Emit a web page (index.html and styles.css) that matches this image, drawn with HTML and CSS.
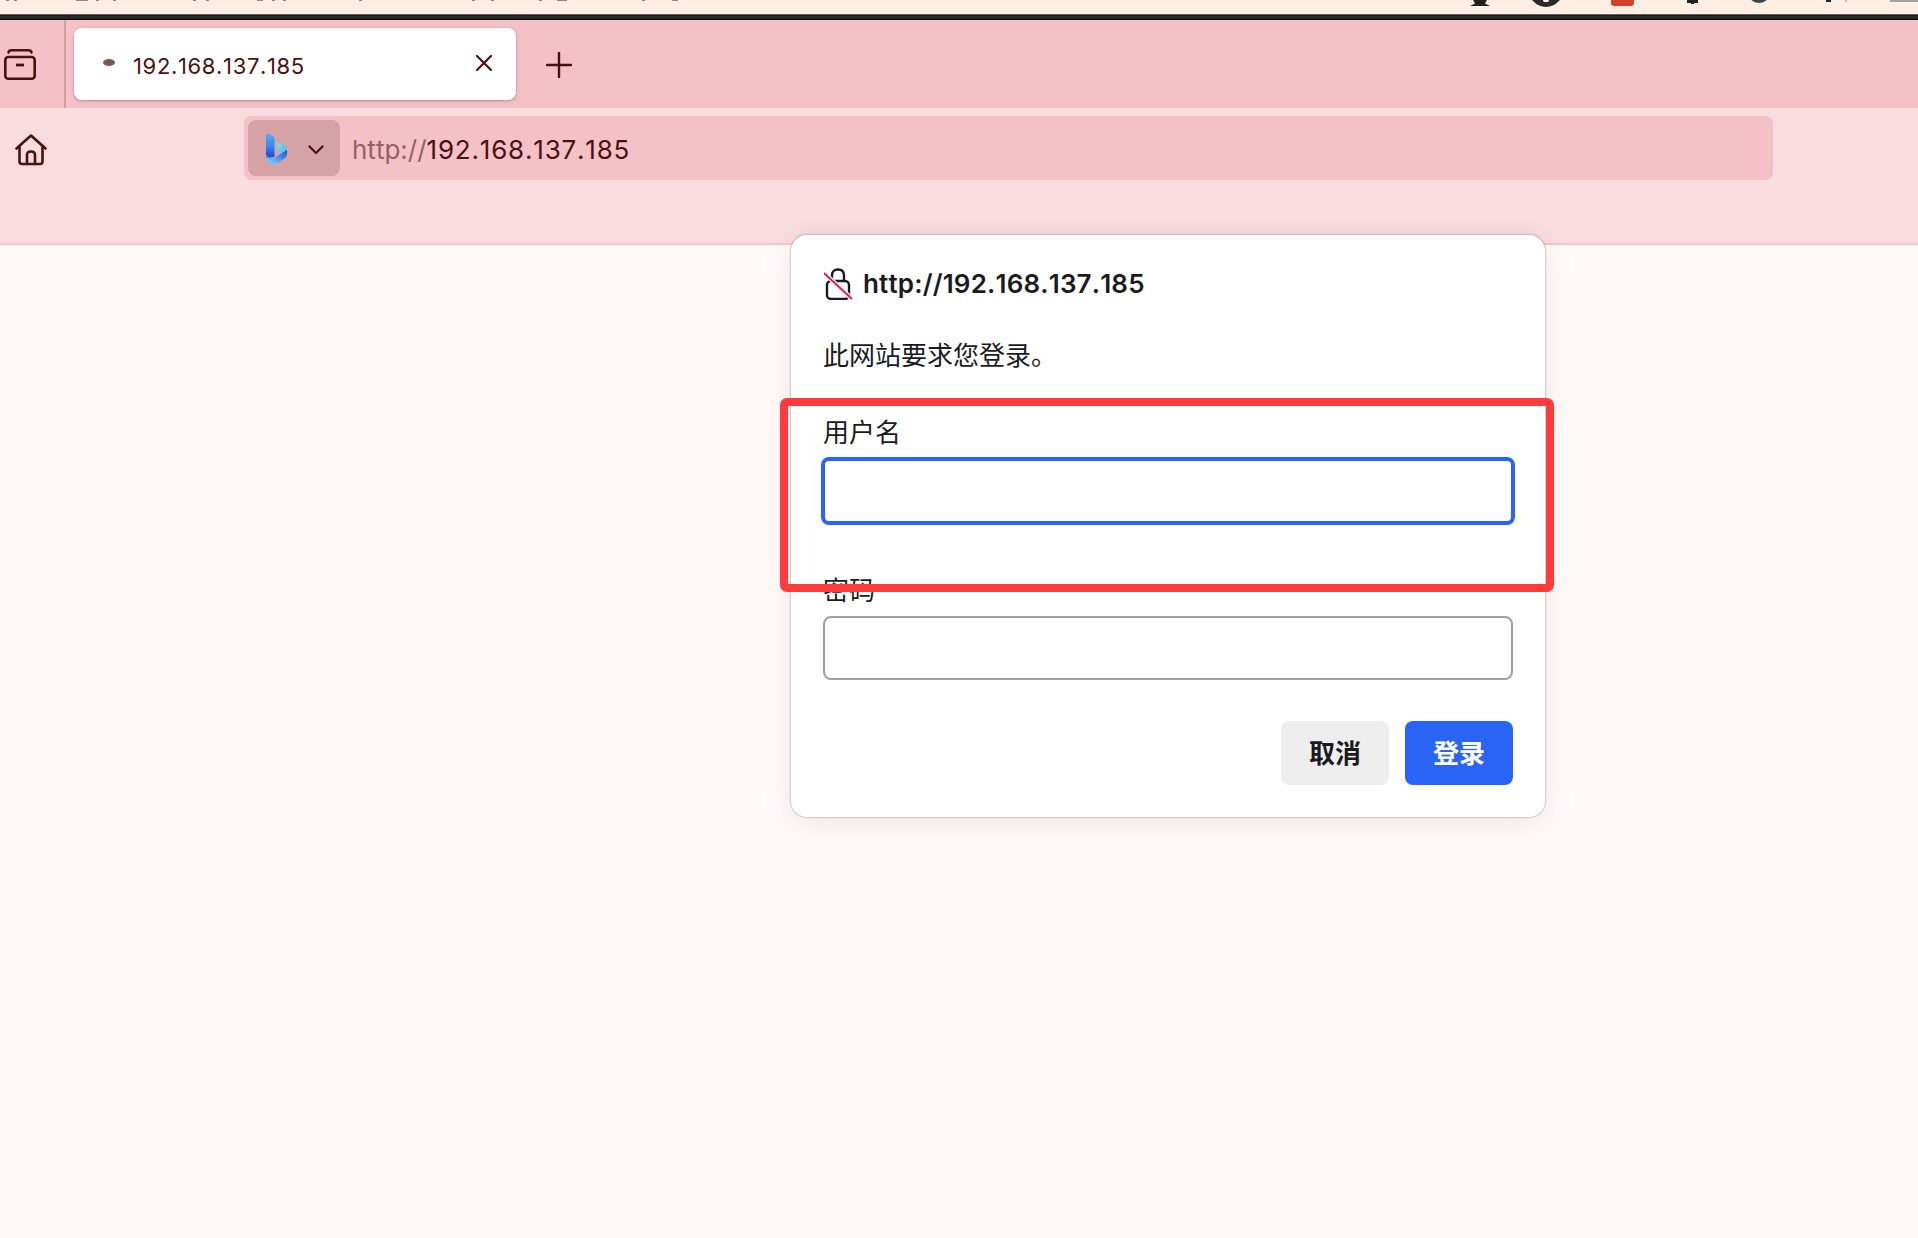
FILE: index.html
```html
<!DOCTYPE html>
<html lang="zh">
<head>
<meta charset="utf-8">
<title>192.168.137.185</title>
<link rel="stylesheet" href="styles.css">
</head>
<body>
<div class="menubar">
  <span class="blip b1"></span><span class="blip b2"></span><span class="blip b3"></span><span class="blip b4"></span>
  <span class="blip b5"></span><span class="blip b6"></span><span class="blip b7"></span><span class="blip b8"></span>
  <span class="blip b9"></span><span class="blip b10"></span><span class="blip b11"></span><span class="blip b12"></span>
  <span class="blip b13"></span><span class="blip b14"></span><span class="blip b15"></span><span class="blip b16"></span><span class="blip b17"></span>
  <span class="tray t1"></span><span class="tray t2"></span><span class="tray t3"></span><span class="tray t4"></span><span class="tray t5"></span><span class="tray t6"></span><span class="tray t7"></span><span class="tray t8"></span>
</div>
<div class="rule"></div>
<header class="tabbar">
  <div class="tabside">
    <svg class="ico-box" viewBox="0 0 32 31" fill="none" stroke="#4a1110" stroke-width="2.600" stroke-linecap="round" stroke-linejoin="round"><path d="M4.500 3.500Q5 1.300 7.500 1.300H24.500Q27 1.300 27.500 3.500"/><rect x="1.300" y="8" width="29.400" height="21.700" rx="3"/><path d="M12 16H20" stroke-width="2.800" stroke-linecap="butt"/></svg>
  </div>
  <div class="tab">
    <span class="favdot"></span>
    <span class="tabtitle">192.168.137.185</span>
    <svg class="ico-x" viewBox="0 0 18 18" fill="none" stroke="#4a1110" stroke-width="2.200" stroke-linecap="round"><path d="M2 2L16 16M16 2L2 16"/></svg>
  </div>
  <svg class="ico-plus" viewBox="0 0 26 26" fill="none" stroke="#4a1110" stroke-width="2.400" stroke-linecap="round"><path d="M13 1V25M1 13H25"/></svg>
</header>
<div class="toolbar">
  <svg class="ico-home" viewBox="0 0 32 32" fill="none" stroke="#4a1110" stroke-width="2.600" stroke-linecap="round" stroke-linejoin="round"><path d="M1.500 14.500L16 1.500L30.500 14.500"/><path d="M4.500 12V27.500Q4.500 30 7 30H25Q27.500 30 27.500 27.500V12"/><path d="M12 30V21Q12 17.500 16 17.500Q20 17.500 20 21V30"/></svg>
  <div class="omnibox">
    <div class="engine">
      <svg class="ico-bing" viewBox="0 0 21 31"><defs><linearGradient id="bg1" x1="0" y1="0" x2="0" y2="1"><stop offset="0" stop-color="#4fb0f7"/><stop offset=".55" stop-color="#3a82ee"/><stop offset="1" stop-color="#2340d6"/></linearGradient><linearGradient id="bg2" x1="0" y1="1" x2="1" y2="0"><stop offset="0" stop-color="#82def6"/><stop offset=".5" stop-color="#4a9af0"/><stop offset="1" stop-color="#2a45cc"/></linearGradient><linearGradient id="bg3" x1="0" y1="0" x2="1" y2="1"><stop offset="0" stop-color="#7be3f0"/><stop offset="1" stop-color="#4fb8ec"/></linearGradient></defs><path d="M10 9L19.500 13Q21 14 21 18L13 21Z" fill="url(#bg3)"/><path d="M0 1.500Q0 0 1.500 .6L6 2.500Q8.500 3.500 8.500 6V24L0 25Z" fill="url(#bg1)"/><path d="M8 25L21 17V21Q21 24 18 26L12 30Q10 31 8 31Q1 31 0 23V21Q1 26 8 25Z" fill="url(#bg2)"/></svg>
      <svg class="ico-chev" viewBox="0 0 16 10" fill="none" stroke="#4a1110" stroke-width="2.200" stroke-linecap="round" stroke-linejoin="round"><path d="M1.500 1.500L8 8L14.500 1.500"/></svg>
    </div>
    <span class="url"><span class="scheme">http://</span><span class="ip">192.168.137.185</span></span>
  </div>
</div>
<main class="page"></main>

<section class="dialog">
  <div class="dtitle">
    <svg class="ico-lock" viewBox="0 0 30 32" fill="none"><path d="M8 14V7.500Q8 1.500 14 1.500Q20 1.500 20 7.500V14" stroke="#1a1a1f" stroke-width="2.400"/><rect x="3" y="13" width="22" height="18" rx="4" stroke="#1a1a1f" stroke-width="2.400"/><path d="M0 5L28 31" stroke="#fff" stroke-width="4.500"/><path d="M0 5L28 31" stroke="#e0294f" stroke-width="2.200"/></svg>
    <span class="host">http://192.168.137.185</span>
  </div>
  <p class="prompt">此网站要求您登录。</p>
  <label class="flabel user" for="u">用户名</label>
  <input class="field focus" id="u" type="text">
  <label class="flabel pass" for="p">密码</label>
  <input class="field" id="p" type="password">
  <div class="actions">
    <button class="btn cancel" type="button">取消</button>
    <button class="btn ok" type="button">登录</button>
  </div>
</section>
<div class="annot"></div>
</body>
</html>
```
FILE: styles.css
```css
* { box-sizing: border-box; }
html, body { margin: 0; height: 100%; }
body {
  width: 1918px;
  height: 1238px;
  overflow: hidden;
  display: flex;
  flex-direction: column;
  background: #fffaf9;
  font-family: Inter, "Noto Sans CJK SC", sans-serif;
  font-kerning: none;
  position: relative;
}
.menubar { height: 14px; background: #ffeee4; position: relative; overflow: hidden; flex: none; }
.blip, .tray { position: absolute; background: #222; }
.blip { top: 0; height: 1px; width: 3px; opacity: .5; }
.b1 { left: 6px; }
.b2 { left: 14px; }
.b3 { left: 76px; width: 12px; }
.b4 { left: 96px; }
.b5 { left: 113px; }
.b6 { left: 193px; }
.b7 { left: 206px; }
.b8 { left: 257px; width: 6px; }
.b9 { left: 272px; }
.b10 { left: 283px; }
.b11 { left: 359px; }
.b12 { left: 472px; }
.b13 { left: 491px; }
.b14 { left: 539px; }
.b15 { left: 557px; width: 10px; }
.b16 { left: 642px; }
.b17 { left: 672px; width: 6px; }
.t1 { left: 1470px; top: 0; width: 20px; height: 6px; background: #222; clip-path: polygon(15% 0, 85% 0, 75% 60%, 100% 100%, 0 100%, 25% 60%); }
.t2 { left: 1528px; top: -32px; width: 36px; height: 39px; border-radius: 50%; background: #2a2a2a; }
.t2::after { content: ""; position: absolute; left: 15px; top: 31px; width: 6px; height: 3px; border-radius: 50%; background: #fff0e6; }
.t3 { left: 1611px; top: -6px; width: 23px; height: 12px; border-radius: 3px; background: #d8402c; }
.t4 { left: 1687px; top: 0; width: 11px; height: 3px; }
.t4::after { content: ""; position: absolute; left: 4px; top: 0; width: 3px; height: 4px; background: #222; }
.t5 { left: 1750px; top: -10px; width: 18px; height: 13px; border-radius: 50%; background: #fff0e6; border: 3px solid #444; }
.t6 { left: 1826px; top: 0; width: 5px; height: 2px; }
.t7 { left: 1845px; top: 0; width: 2px; height: 2px; background: #c8c0ba; }
.t8 { left: 1890px; top: 0; width: 28px; height: 2px; background: #a8a29d; }
.rule { height: 6px; flex: none; background: linear-gradient(#8a8580, #1a1a1a 25%, #333 55%, #000); }

.tabbar { height: 88px; background: #f3c1c6; display: flex; align-items: flex-start; flex: none; }
.tabside { width: 66px; height: 88px; border-right: 2px solid #d29ea2; padding: 29px 0 0 4px; flex: none; }
.ico-box { display: block; width: 32px; height: 31px; }
.tab {
  width: 442px; height: 72px; margin: 8px 0 0 8px; padding: 0 23px 0 29px;
  background: #fff; border-radius: 8px; box-shadow: 0 1px 3px rgba(90, 30, 30, .35);
  display: flex; align-items: center; flex: none;
}
.favdot { width: 12px; height: 7px; border-radius: 50%; background: #7e5650; margin: -4px 18px 0 0; flex: none; }
.tabtitle { flex: 1; font-size: 22px; letter-spacing: .65px; color: #4a1110; margin-top: 3px; }
.ico-x { width: 18px; height: 18px; margin-top: -2px; }
.ico-plus { width: 26px; height: 26px; margin: 32px 0 0 30px; flex: none; }

.toolbar { height: 137px; background: #f8dce0; border-bottom: 2px solid #f6c4ca; display: flex; align-items: flex-start; flex: none; }
.ico-home { width: 32px; height: 32px; margin: 26px 0 0 15px; flex: none; }
.omnibox { width: 1529px; height: 64px; margin: 8px 0 0 197px; background: #f3c1c6; border-radius: 8px; padding: 4px; display: flex; align-items: center; }
.engine { width: 92px; height: 56px; background: #d5a3a6; border-radius: 8px; display: flex; align-items: center; padding-left: 18px; flex: none; }
.ico-bing { width: 21px; height: 31px; }
.ico-chev { width: 16px; height: 10px; margin: 3px 0 0 21px; }
.url { font-size: 26px; color: #4a1110; margin: 2px 0 0 12px; }
.scheme { opacity: .55; }
.ip { letter-spacing: .8px; }
.page { flex: 1; }

.dialog {
  position: absolute; left: 791px; top: 235px; width: 754px; height: 582px;
  background: #fff; border-radius: 16px; padding: 33px 32px 0;
  box-shadow: 0 0 1px 1px rgba(80, 40, 40, .2), 0 6px 30px rgba(80, 40, 40, .1);
  display: flex; flex-direction: column; color: #1b1b1f;
}
.dtitle { display: flex; align-items: center; gap: 9px; height: 32px; flex: none; }
.ico-lock { width: 30px; height: 32px; margin-left: 1px; margin-top: -1px; flex: none; }
.host { font-size: 26px; font-weight: 600; letter-spacing: .17px; line-height: 32px; }
.prompt { margin: 38px 0 0; font-size: 26px; line-height: 36px; }
.flabel { font-size: 26px; line-height: 36px; display: block; }
.user { margin-top: 41px; }
.pass { margin-top: 48px; }
.field { display: block; width: 690px; height: 64px; margin-top: 7px; border: 2px solid #a0a0a0; border-radius: 8px; background: #fff; outline: none; flex: none; }
.field.focus { width: 694px; height: 68px; margin: 6px 0 0 -2px; border: 4px solid #2a64f6; }
.actions { display: flex; justify-content: flex-end; gap: 16px; margin-top: 41px; width: 690px; }
.btn { width: 108px; height: 64px; border: 0; border-radius: 8px; font-family: inherit; font-size: 26px; font-weight: 700; padding: 0 0 4px; }
.cancel { background: #eee; color: #1b1b1f; }
.ok { background: #2a64f6; color: #fff; }

.annot { position: absolute; left: 780px; top: 398px; width: 774px; height: 194px; border: 8px solid #ff3b3b; border-radius: 7px; }
```
